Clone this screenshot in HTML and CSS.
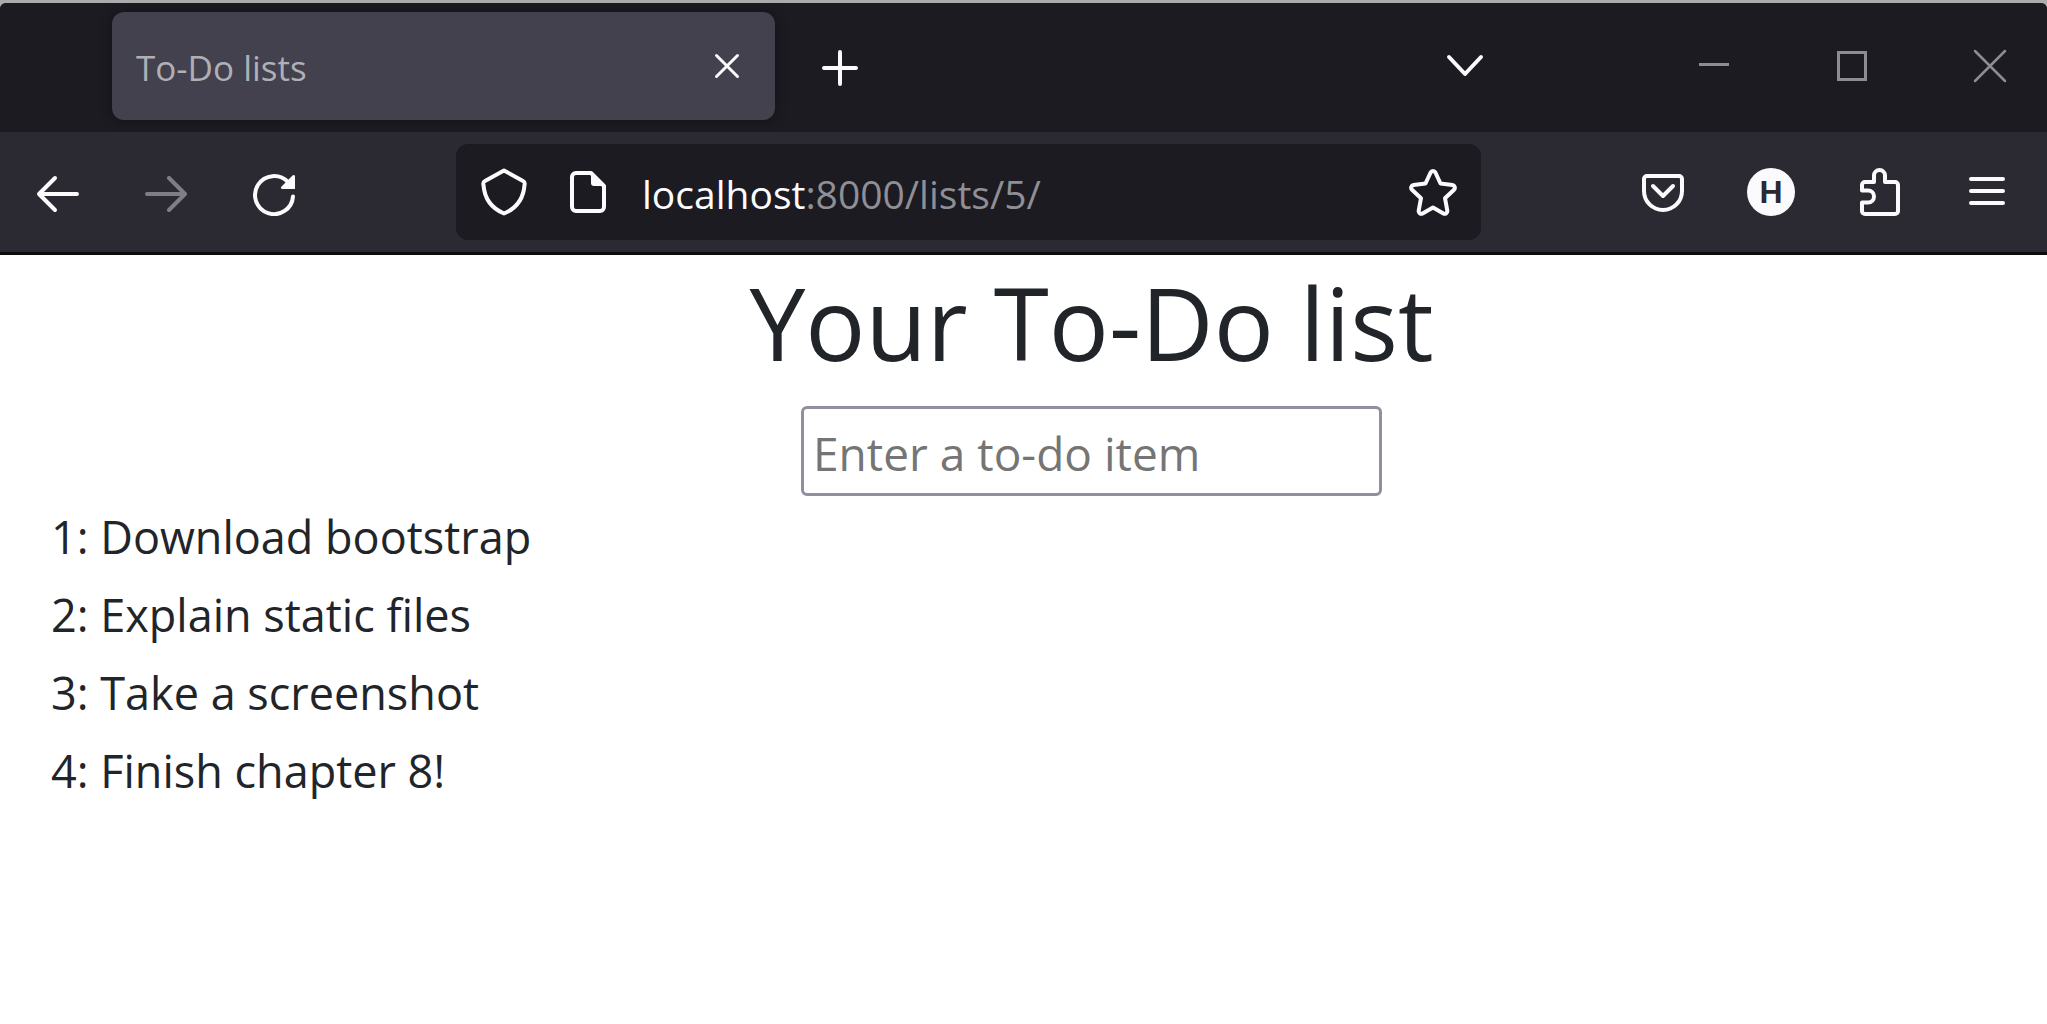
FILE: index.html
```html
<!DOCTYPE html>
<html lang="en">
<head>
<meta charset="utf-8">
<title>To-Do lists</title>
<link rel="stylesheet" href="styles.css">
</head>
<body>
<div class="frame">
  <header class="chrome">
    <div class="tabbar">
      <div class="tab">
        <span class="tab-title">To-Do lists</span>
        <button class="tab-close" type="button" aria-label="Close tab">
          <svg class="icon" viewBox="0 0 48 48"><path d="M13.500 13.500l21 21M34.500 13.500l-21 21"/></svg>
        </button>
      </div>
      <button class="tool new-tab" type="button" aria-label="New tab">
        <svg class="icon" viewBox="0 0 48 48"><path d="M24 10v32M8 26h32" stroke-width="4"/><circle class="solid" cx="24" cy="26" r="3"/></svg>
      </button>
      <button class="tool all-tabs" type="button" aria-label="List all tabs">
        <svg class="icon" viewBox="0 0 48 48"><path d="M8 15l16 17 16-17" stroke-width="4"/></svg>
      </button>
      <div class="controls">
        <button class="control" type="button" aria-label="Minimize"><svg class="icon" viewBox="0 0 48 48"><path class="square" d="M9 22.500h30"/></svg></button>
        <button class="control" type="button" aria-label="Maximize"><svg class="icon" viewBox="0 0 48 48"><path class="square" d="M10.500 10.500h27v27h-27z"/></svg></button>
        <button class="control" type="button" aria-label="Close"><svg class="icon" viewBox="0 0 48 48"><path d="M9 9l30 30M39 9L9 39" stroke-width="2.500"/></svg></button>
      </div>
    </div>
    <nav class="toolbar" aria-label="Navigation">
      <div class="tools">
        <button class="tool" type="button" aria-label="Back"><svg class="icon" viewBox="0 0 48 48"><path d="M21 10L5 26l16 16M5 26h38" stroke-width="4"/></svg></button>
        <button class="tool" type="button" aria-label="Forward" disabled><svg class="icon" viewBox="0 0 48 48"><path d="M27 10l16 16-16 16M43 26H5" stroke-width="4"/></svg></button>
        <button class="tool" type="button" aria-label="Reload"><svg class="icon" viewBox="0 0 48 48"><path d="M38 14.200A19 19 0 1 0 43 28.500" stroke-width="4"/><path class="solid" d="M32.500 21H45V8.500c0-1.800-1.500-2-2.500-1L31.500 18.500c-1.200 1.200-.6 2.500 1 2.500z"/></svg></button>
      </div>
      <div class="urlbar">
        <svg class="icon" viewBox="0 0 48 48"><path d="M24 2.500L43 13C45 14 45 15 44.500 17 43.500 31 37 40 24 45.500 11 40 4.500 31 3.500 17 3 15 3 14 5 13z" stroke-width="4"/></svg>
        <svg class="icon page-icon" viewBox="0 0 48 48"><path d="M12 5h15L40 18v21a4 4 0 0 1-4 4H12a4 4 0 0 1-4-4V9a4 4 0 0 1 4-4z" stroke-width="4"/><path class="solid" d="M27 3v12a3 3 0 0 0 3 3h12z"/></svg>
        <p class="url"><span class="host">localhost</span>:8000/lists/5/</p>
        <button class="star" type="button" aria-label="Bookmark this page"><svg class="icon" viewBox="0 0 48 48"><path d="M21.600 4.500a2.700 2.700 0 0 1 4.800 0L31.500 15.500l12 1.600a2.700 2.700 0 0 1 1.500 4.600L36 30.200l2.300 12.500a2.700 2.700 0 0 1-3.900 2.800L24 39.500l-10.400 6a2.700 2.700 0 0 1-3.900-2.800L12 30.200 3 21.700a2.700 2.700 0 0 1 1.500-4.600l12-1.600z" stroke-width="4"/></svg></button>
      </div>
      <div class="tools">
        <button class="tool" type="button" aria-label="Save to Pocket"><svg class="icon" viewBox="0 0 48 48"><path d="M8 8h32a3 3 0 0 1 3 3v12a19 19 0 0 1-38 0V11a3 3 0 0 1 3-3z" stroke-width="4"/><path d="M14 18l10 10 10-10" stroke-width="4"/></svg></button>
        <button class="tool" type="button" aria-label="H extension"><span class="badge">H</span></button>
        <button class="tool" type="button" aria-label="Extensions"><svg class="icon" viewBox="0 0 48 48"><path d="M10 14H19V7.500a5.500 5.500 0 0 1 11 0V14H40a3 3 0 0 1 3 3V43a3 3 0 0 1-3 3H10a3 3 0 0 1-3-3V34.500H13a6 6 0 0 0 0-12H7V17a3 3 0 0 1 3-3z" stroke-width="4"/></svg></button>
        <button class="tool" type="button" aria-label="Open menu"><svg class="icon" viewBox="0 0 48 48"><path d="M8 11h32M8 23h32M8 35h32" stroke-width="4"/></svg></button>
      </div>
    </nav>
  </header>
</div>
<main class="page">
  <form class="entry">
    <h1 class="heading"><label for="item">Your To-Do list</label></h1>
    <input class="item-input" id="item" type="text" placeholder="Enter a to-do item">
  </form>
  <table class="list">
    <tbody>
      <tr><td>1: Download bootstrap</td></tr>
      <tr><td>2: Explain static files</td></tr>
      <tr><td>3: Take a screenshot</td></tr>
      <tr><td>4: Finish chapter 8!</td></tr>
    </tbody>
  </table>
</main>
</body>
</html>
```
FILE: styles.css
```css
* { box-sizing: border-box; }

body {
  margin: 0;
  background: #fff;
  color: #212529;
  font-family: "Open Sans", "Noto Sans", sans-serif;
}

button {
  display: flex;
  align-items: center;
  justify-content: center;
  padding: 0;
  border: 0;
  background: none;
  color: inherit;
  font: inherit;
}

/* Browser chrome */
.frame {
  padding-top: 3px;
  background: #ababab;
}

.chrome {
  overflow: hidden;
  border-bottom: 3px solid #0c0c0d;
  border-radius: 6px 6px 0 0;
  background: #2b2a33;
  color: #fbfbfe;
}

.icon {
  flex: none;
  width: 48px;
  height: 48px;
  fill: none;
  stroke: currentColor;
  stroke-width: 3;
  stroke-linecap: round;
  stroke-linejoin: round;
}

.icon .solid {
  fill: currentColor;
  stroke: none;
}

.icon .square {
  stroke-linecap: butt;
  stroke-linejoin: miter;
}

.tabbar {
  display: flex;
  align-items: center;
  padding: 9px 0 12px 112px;
  background: #1c1b22;
}

.tab {
  display: flex;
  flex: 0 1 663px;
  align-items: center;
  justify-content: space-between;
  height: 108px;
  padding: 0 24px;
  border-radius: 12px;
  background: #42414d;
  box-shadow: 0 0 12px rgba(0, 0, 0, 0.4);
}

.tab-title {
  padding-top: 4px;
  color: #afafb5;
  font-size: 35px;
  line-height: 48px;
}

.tool {
  flex: none;
  width: 96px;
  height: 96px;
}

.tool:disabled { opacity: 0.4; }

.new-tab { margin-left: 17px; }

.all-tabs {
  margin-right: 144px;
  margin-left: auto;
}

.controls {
  display: flex;
  gap: 24px;
  color: #8d8d91;
}

.control {
  width: 114px;
  height: 108px;
}

.toolbar {
  display: flex;
  align-items: center;
  height: 120px;
  padding: 0 12px 0 10px;
}

.tools {
  display: flex;
  gap: 12px;
}

.urlbar {
  display: flex;
  flex: 1;
  align-items: center;
  height: 96px;
  margin: 0 134px;
  padding: 0 24px;
  border-radius: 12px;
  background: #1c1b22;
}

.page-icon { margin-left: 36px; }

.url {
  flex: 1;
  margin: 0 0 0 30px;
  padding-top: 4px;
  color: #8f8f95;
  font-size: 39px;
  line-height: 54px;
}

.host { color: #fbfbfe; }

.badge {
  width: 48px;
  height: 48px;
  border-radius: 50%;
  background: #fbfbfe;
  color: #2b2a33;
  font: bold 32px/48px "Liberation Sans", sans-serif;
  text-align: center;
}

/* Page content */
.entry {
  display: flex;
  flex-direction: column;
  align-items: center;
  padding-left: 136px;
}

.heading {
  margin: 8px 0 24px;
  font-size: 100px;
  font-weight: 400;
  line-height: 119px;
}

.item-input {
  width: 581px;
  height: 90px;
  padding: 3px 9px 0;
  border: 3px solid #8f8f9d;
  border-radius: 6px;
  background: #fff;
  color: #212529;
  font: inherit;
  font-size: 46px;
}

.item-input::placeholder {
  color: #757575;
  opacity: 1;
}

.list {
  margin: 2px 0 0 48px;
  border-spacing: 0;
  font-size: 45px;
  line-height: 72px;
}

.list td { padding: 3px; }
```
